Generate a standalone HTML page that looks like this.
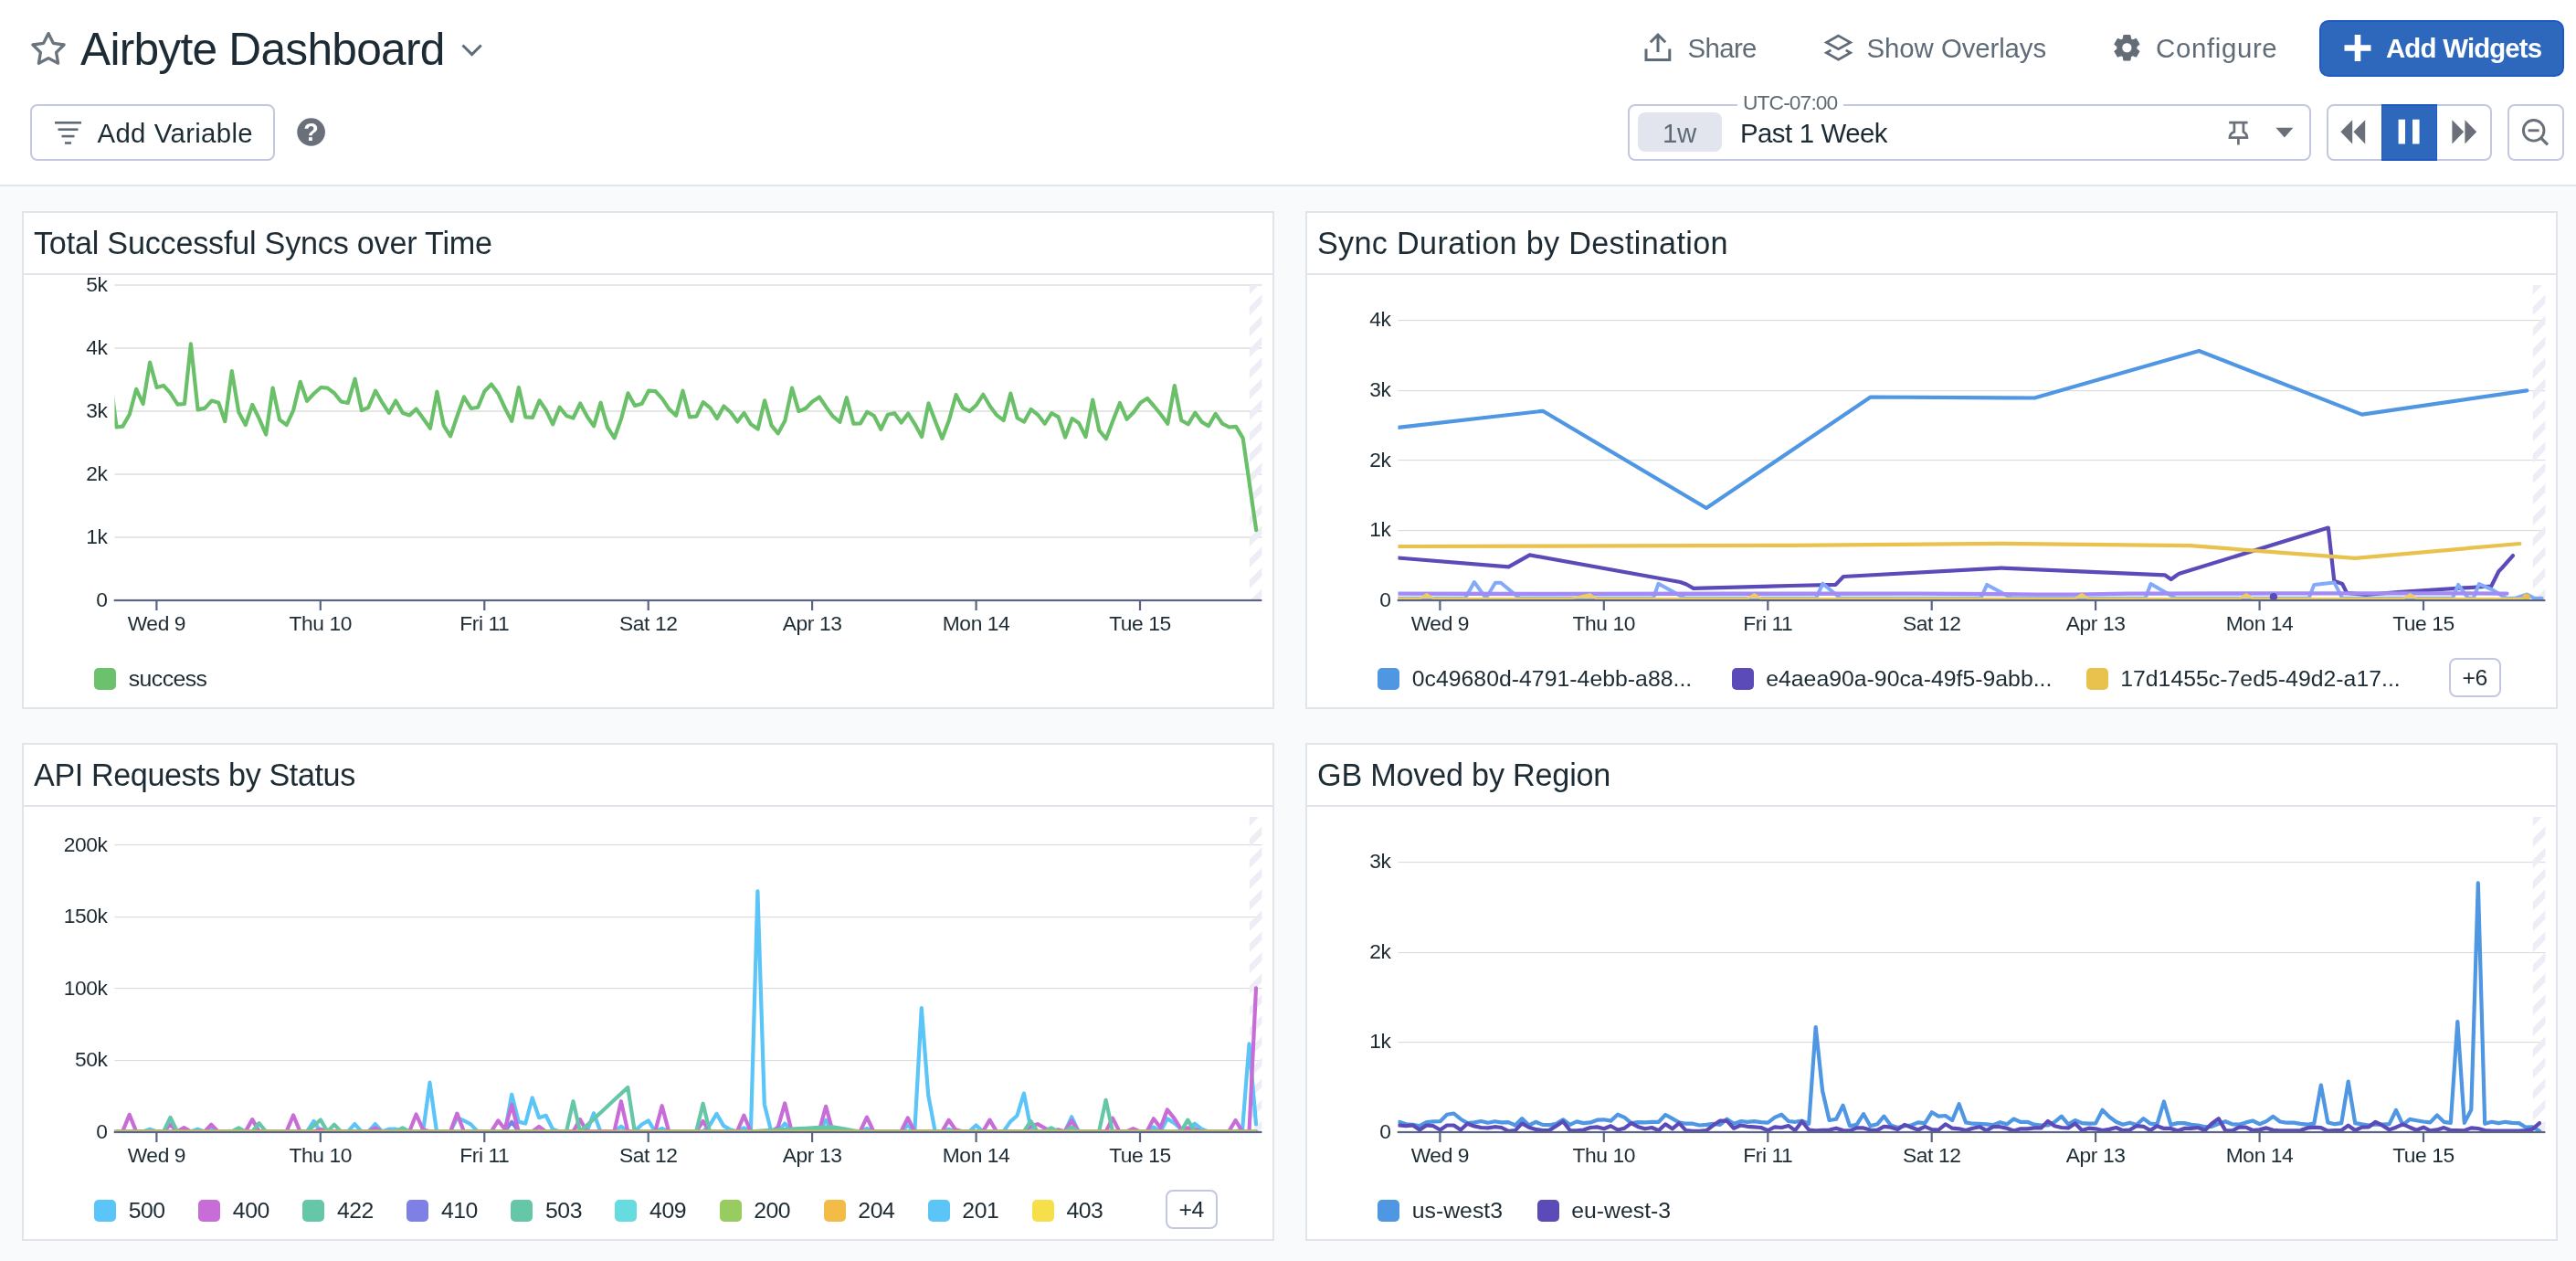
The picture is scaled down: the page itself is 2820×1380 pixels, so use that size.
<!DOCTYPE html>
<html lang="en"><head><meta charset="utf-8"><title>Airbyte Dashboard</title>
<style>
html,body{margin:0;padding:0}
body{width:2820px;height:1380px;overflow:hidden;background:#f9fafb;font-family:"Liberation Sans", "DejaVu Sans", sans-serif;color:#1c2b34;position:relative}
.hdr{position:absolute;left:0;top:0;width:2820px;height:202px;background:#fff;border-bottom:2px solid #e3e5ed}
.abs{position:absolute;white-space:nowrap}
.title{left:88px;top:25.7px;font-size:49.7px;line-height:56px;letter-spacing:-0.76px;color:#1c2b34}
.btn{position:absolute;box-sizing:border-box;border:2px solid #c3c8e0;border-radius:8px;background:#fff}
.t28{font-size:29.4px;line-height:34px;word-spacing:0.5px}
.grey{color:#5f6b76}
.panel{position:absolute;box-sizing:border-box;width:1371px;height:545px;background:#fff;border:2px solid #e2e4ec}
.panel .pt{position:absolute;left:11px;top:13.3px;font-size:34.2px;line-height:40px;white-space:nowrap;color:#1c2b34}
.panel .psep{position:absolute;left:0;top:66px;width:1367px;height:2px;background:#e2e4ec}
.panel svg.ch{position:absolute;left:-2px;top:-2px}
.tk{font-family:"Liberation Sans", "DejaVu Sans", sans-serif;font-size:22.8px;letter-spacing:-0.4px;fill:#1c2b34}
.sw{position:absolute;top:498px;width:24px;height:24px;border-radius:5px;margin-left:-2px}
.lg{position:absolute;top:494.8px;font-size:24.8px;line-height:30px;white-space:nowrap;margin-left:-2px;color:#1c2b34}
.more{position:absolute;top:486.5px;height:43.5px;box-sizing:border-box;border:2px solid #c3c8e0;border-radius:8px;font-size:24.8px;line-height:40px;letter-spacing:-0.4px;text-align:center;margin-left:-2px;color:#1c2b34}
#wrap{position:absolute;left:0;top:0;width:2820px;height:1380px;will-change:transform}

</style></head><body>
<div id="wrap">
<div class="hdr">
<svg class="abs" style="left:32px;top:32px" width="42" height="42" viewBox="0 0 42 42"><path d="M21.0 4.6 L26.3 15.3 L38.1 17.0 L29.6 25.4 L31.6 37.2 L21.0 31.6 L10.4 37.2 L12.4 25.4 L3.9 17.0 L15.7 15.3 Z" fill="none" stroke="#6b747c" stroke-width="3.3" stroke-linejoin="round"/></svg>
<div class="abs title">Airbyte Dashboard</div>
<svg class="abs" style="left:503px;top:45px" width="28" height="20" viewBox="0 0 28 20"><path d="M3.5 4.5 L13.6 14.6 L23.7 4.5" fill="none" stroke="#5f6b76" stroke-width="3"/></svg>

<div class="btn" style="left:33px;top:114px;width:268px;height:62px"></div>
<svg class="abs" style="left:58px;top:130px" width="34" height="30" viewBox="0 0 34 30"><g fill="#5f6b76"><rect x="2" y="3" width="29" height="2.6"/><rect x="5.5" y="10.4" width="22" height="2.6"/><rect x="9.5" y="17.8" width="14" height="2.6"/><rect x="13" y="25.2" width="7" height="2.6"/></g></svg>
<div class="abs t28" style="left:106.5px;top:129px;letter-spacing:0.32px;color:#1c2b34">Add Variable</div>
<svg class="abs" style="left:324px;top:128px" width="34" height="34" viewBox="0 0 34 34"><circle cx="16.6" cy="16.5" r="15.3" fill="#6a7079"/><text x="16.6" y="26.4" text-anchor="middle" font-family="Liberation Sans, sans-serif" font-weight="bold" font-size="27" fill="#fff">?</text></svg>

<!-- right actions -->
<svg class="abs" style="left:1797.4px;top:32px" width="36" height="38" viewBox="0 0 36 38"><path d="M5 21.5 V33.4 H30.8 V21.5" fill="none" stroke="#5f6b76" stroke-width="3"/><path d="M18 25 V6.5 M9.8 14.2 L18 6 L26.2 14.2" fill="none" stroke="#5f6b76" stroke-width="3"/></svg>
<div class="abs t28 grey" style="left:1847.5px;top:36.3px;letter-spacing:-0.63px">Share</div>
<svg class="abs" style="left:1994px;top:34px" width="38" height="36" viewBox="0 0 38 36"><path d="M18.55 5.1 L31.7 12.45 L18.55 19.8 L5.4 12.45 Z" fill="none" stroke="#5f6b76" stroke-width="2.7" stroke-linejoin="miter"/><path d="M10.4 20.9 L5.4 23.7 L18.55 31.2 L31.7 23.7 L26.7 20.9" fill="none" stroke="#5f6b76" stroke-width="2.7"/></svg>
<div class="abs t28 grey" style="left:2043.5px;top:36.3px;letter-spacing:-0.13px">Show Overlays</div>
<svg class="abs" style="left:2312px;top:36px" width="33" height="33" viewBox="0 0 33 33"><path fill="#646d76" fill-rule="evenodd" stroke="#646d76" stroke-width="1" stroke-linejoin="round" d="M12.26 6.54 L12.84 2.55 L19.96 2.55 L20.54 6.54 L22.78 7.83 L26.53 6.35 L30.08 12.51 L26.92 15.01 L26.92 17.59 L30.08 20.09 L26.53 26.25 L22.78 24.77 L20.54 26.06 L19.96 30.05 L12.84 30.05 L12.26 26.06 L10.02 24.77 L6.27 26.25 L2.72 20.09 L5.88 17.59 L5.88 15.01 L2.72 12.51 L6.27 6.35 L10.02 7.83 Z M22.00 16.30 A5.6 5.6 0 1 0 10.80 16.30 A5.6 5.6 0 1 0 22.00 16.30 Z"/></svg>
<div class="abs t28 grey" style="left:2360px;top:36.3px;letter-spacing:0.66px">Configure</div>
<div class="abs" style="left:2539px;top:22px;width:268px;height:62px;box-sizing:border-box;border-radius:10px;background:#2d68bd;border:2px solid #1f5ac4"></div>
<svg class="abs" style="left:2564px;top:36px" width="34" height="34" viewBox="0 0 34 34"><path d="M17 2 V31 M2.5 16.5 H31.5" stroke="#fff" stroke-width="6.6" fill="none"/></svg>
<div class="abs t28" style="left:2612px;top:36.3px;color:#fff;font-weight:bold;letter-spacing:-0.88px">Add Widgets</div>

<!-- time picker -->
<div class="btn" style="left:1782px;top:114px;width:748px;height:62px"></div>
<div class="abs" style="left:1902px;top:110px;width:116px;height:10px;background:#fff"></div>
<div class="abs grey" style="left:1908px;top:98px;font-size:22.8px;line-height:28px;letter-spacing:-0.9px">UTC-07:00</div>
<div class="abs" style="left:1793px;top:123px;width:92px;height:43px;border-radius:8px;background:#e2e5ee"></div>
<div class="abs t28 grey" style="letter-spacing:-0.43px;left:1820px;top:129.2px">1w</div>
<div class="abs t28" style="left:1905px;top:129.2px;letter-spacing:-0.56px;color:#1c2b34">Past 1 Week</div>
<svg class="abs" style="left:2436px;top:130px" width="30" height="32" viewBox="0 0 30 32"><path d="M4.2 4.2 H24.6 M9.9 4.2 V14.2 C7 15.3 4.9 17.5 4.9 20.6 H23.9 C23.9 17.5 22 15.3 19.9 14.2 V4.2 M14.4 20.6 V28.6" fill="none" stroke="#6a7079" stroke-width="2.7"/></svg>
<svg class="abs" style="left:2489px;top:137px" width="24" height="16" viewBox="0 0 24 16"><path d="M2.4 2.7 H21.4 L11.9 13.4 Z" fill="#6a7079"/></svg>

<div class="btn" style="left:2547px;top:114px;width:181px;height:62px"></div>
<div class="abs" style="left:2607px;top:114px;width:61px;height:62px;background:#2d68bd;box-sizing:border-box;border:2px solid #1f5ac4;border-left-width:1px;border-right-width:1px"></div>
<svg class="abs" style="left:2560px;top:129px" width="32" height="30" viewBox="0 0 32 30"><path d="M2.4 15.3 L15.2 2.2 V28.4 Z M16.4 15.3 L29.2 2.2 V28.4 Z" fill="#6a7079"/></svg>
<svg class="abs" style="left:2623px;top:129px" width="30" height="30" viewBox="0 0 30 30"><path d="M2.6 1.8 H10 V28.4 H2.6 Z M18 1.8 H25.6 V28.4 H18 Z" fill="#fff"/></svg>
<svg class="abs" style="left:2682px;top:129px" width="32" height="30" viewBox="0 0 32 30"><path d="M29.2 15.3 L16.4 2.2 V28.4 Z M15.2 15.3 L2.4 2.2 V28.4 Z" fill="#6a7079"/></svg>

<div class="btn" style="left:2745px;top:114px;width:62px;height:62px"></div>
<svg class="abs" style="left:2757px;top:127px" width="36" height="36" viewBox="0 0 36 36"><circle cx="16.7" cy="15.8" r="11.3" fill="none" stroke="#6a7079" stroke-width="2.9"/><path d="M24.6 23.8 L32 31.4" stroke="#6a7079" stroke-width="3.2" fill="none"/><path d="M10.6 15.8 H22.6" stroke="#6a7079" stroke-width="2.9" fill="none"/></svg>
</div>

<div class="panel" style="left:24px;top:231px"><div class="pt" style="letter-spacing:-0.23px">Total Successful Syncs over Time</div><div class="psep"></div><svg class="ch" width="1371" height="545" viewBox="0 0 1371 545"><defs><pattern id="h1" width="16.26" height="16.26" patternUnits="userSpaceOnUse" patternTransform="rotate(-45)"><rect x="0" y="0" width="16.26" height="6.6" fill="#ecedf5"/></pattern><clipPath id="c1"><rect x="101.5" y="75.0" width="1255.9" height="352.0"/></clipPath></defs><rect x="101.5" y="356" width="1255.9" height="2" fill="#e6e6e6"/><rect x="101.5" y="287" width="1255.9" height="2" fill="#e6e6e6"/><rect x="101.5" y="218" width="1255.9" height="2" fill="#e6e6e6"/><rect x="101.5" y="149" width="1255.9" height="2" fill="#e6e6e6"/><rect x="101.5" y="80" width="1255.9" height="2" fill="#e6e6e6"/><rect x="1343.8" y="81.0" width="13.6" height="344.0" fill="url(#h1)"/><text x="93.5" y="432.8" text-anchor="end" class="tk">0</text><text x="93.5" y="363.8" text-anchor="end" class="tk">1k</text><text x="93.5" y="294.8" text-anchor="end" class="tk">2k</text><text x="93.5" y="225.8" text-anchor="end" class="tk">3k</text><text x="93.5" y="156.8" text-anchor="end" class="tk">4k</text><text x="93.5" y="87.8" text-anchor="end" class="tk">5k</text><g clip-path="url(#c1)"><polyline points="94.5,166.3 103.5,236.5 110.3,235.6 117.7,222.8 125.2,194.8 132.6,211 140.1,165.6 147.6,193 155,190.9 162.5,199.2 170.5,211.6 178,211 184.9,145.4 192.6,217.4 200.3,215.6 207.8,207.5 215.3,209.7 222.3,230.2 229.8,175 237.4,220.3 244.8,234 252.3,212 259.7,227.1 267.2,244.5 274.6,193.6 282.1,228.4 289.8,234 297.2,217.8 304.7,186.8 312.1,207.9 319.6,199.8 327.3,193 334.5,193.6 342,199.2 349.4,208.5 356.9,210 364.6,183.7 372,218.2 379.2,215 387.1,196.7 394.5,209.7 401.8,220.9 409.2,207.5 416.9,220.9 424.3,223.4 431.7,216.6 439.3,227.1 447,237.7 454.4,197.7 461.7,234.6 469.1,246.4 476.6,224 484,203.5 491.7,216 499.2,214.7 506.4,197.3 513.8,189.6 521.5,199.8 529,216 536.2,229.9 543.9,193 551.3,225.3 559,225.9 566.5,207.3 573.7,217.8 581.2,233.3 588.6,214.7 596.1,224 603.5,226.5 611.2,210.4 618.7,224.7 626.1,235.2 633.6,209.7 641,236.5 648.6,248.3 656.1,227.1 663.5,199.4 671,212.9 678.7,210.7 686.1,196.7 693.6,197.1 701,205.4 708.5,216.6 716.1,223.7 723.5,196.7 730.9,225.3 738.4,224.7 745.8,209.1 753.5,215.3 761,227.1 768.4,213.5 775.9,220.3 783.3,230.6 790.5,220.9 798,233.3 805.7,238.6 813.1,207.3 820.6,234.6 827.8,243.3 835.3,229.6 843,193.6 850.4,219.1 857.9,216 865.3,208.5 873,203.5 880.5,214.7 887.9,224.7 895.4,230.9 902.8,204.2 910.4,232.7 917.9,232.4 925.3,219.7 932.8,224 940.3,238.9 947.8,222.8 955.3,221.2 962.7,231.5 970.2,221.5 977.6,233.3 985.1,247 992.5,210.4 1000,230.2 1007.4,248.9 1015.1,228.4 1022.6,201 1030,215.3 1037.4,219.1 1044.9,212.2 1052.3,200.8 1059.8,213.5 1067.2,223.4 1074.7,229 1082.3,199.6 1089.7,226.5 1097.2,230.6 1104.6,217 1112.1,222.8 1119.8,232.7 1127.2,221.2 1134.7,225.3 1142.1,247.6 1149.6,227.1 1157.1,232.1 1164.5,247 1172.2,206.6 1179.4,240.2 1186.9,249.2 1194.3,229.6 1201.9,210 1209.5,227.8 1216.9,220.3 1224.5,209.7 1232,205 1239.4,213.5 1246.9,222.8 1254.3,232.7 1261.8,191.1 1269.2,229 1276.7,233.3 1284.4,220.7 1291.8,230.9 1299,235.2 1306.7,221.9 1314.2,232.7 1321.7,236.5 1329.1,235.8 1336.6,248.3 1351.2,349.1" fill="none" stroke="#6abf69" stroke-width="4.2" stroke-linejoin="round" stroke-linecap="round" /></g><rect x="100.7" y="424.9" width="1256.7" height="2.2" fill="#5a6480"/><rect x="146.3" y="427.0" width="2.2" height="10" fill="#5a6480"/><text x="147.4" y="459.3" text-anchor="middle" class="tk">Wed 9</text><rect x="325.7" y="427.0" width="2.2" height="10" fill="#5a6480"/><text x="326.8" y="459.3" text-anchor="middle" class="tk">Thu 10</text><rect x="505.2" y="427.0" width="2.2" height="10" fill="#5a6480"/><text x="506.3" y="459.3" text-anchor="middle" class="tk">Fri 11</text><rect x="684.6" y="427.0" width="2.2" height="10" fill="#5a6480"/><text x="685.7" y="459.3" text-anchor="middle" class="tk">Sat 12</text><rect x="864" y="427.0" width="2.2" height="10" fill="#5a6480"/><text x="865.1" y="459.3" text-anchor="middle" class="tk">Apr 13</text><rect x="1043.5" y="427.0" width="2.2" height="10" fill="#5a6480"/><text x="1044.6" y="459.3" text-anchor="middle" class="tk">Mon 14</text><rect x="1222.9" y="427.0" width="2.2" height="10" fill="#5a6480"/><text x="1224" y="459.3" text-anchor="middle" class="tk">Tue 15</text></svg><i class="sw" style="left:79px;background:#6bc16c"></i><span class="lg" style="left:116.7px;letter-spacing:-0.55px">success</span></div>
<div class="panel" style="left:1429px;top:231px"><div class="pt" style="letter-spacing:0.32px">Sync Duration by Destination</div><div class="psep"></div><svg class="ch" width="1371" height="545" viewBox="0 0 1371 545"><defs><pattern id="h2" width="16.26" height="16.26" patternUnits="userSpaceOnUse" patternTransform="rotate(-45)"><rect x="0" y="0" width="16.26" height="6.6" fill="#ecedf5"/></pattern><clipPath id="c2"><rect x="101.5" y="75.0" width="1255.9" height="352.0"/></clipPath></defs><rect x="101.5" y="349" width="1255.9" height="1.15" fill="#dcdcdc"/><rect x="101.5" y="272" width="1255.9" height="1.15" fill="#dcdcdc"/><rect x="101.5" y="196" width="1255.9" height="1.15" fill="#dcdcdc"/><rect x="101.5" y="119" width="1255.9" height="1.15" fill="#dcdcdc"/><rect x="1343.8" y="81.0" width="13.6" height="344.0" fill="url(#h2)"/><text x="93.5" y="432.8" text-anchor="end" class="tk">0</text><text x="93.5" y="356.2" text-anchor="end" class="tk">1k</text><text x="93.5" y="279.6" text-anchor="end" class="tk">2k</text><text x="93.5" y="203" text-anchor="end" class="tk">3k</text><text x="93.5" y="126.4" text-anchor="end" class="tk">4k</text><g clip-path="url(#c2)"><polyline points="101.2,379.5 222.5,389.4 245.6,376.4 410.4,406 417.2,408.5 424.9,412.8 531,410 580.5,408.9 589,400 761.6,390.6 940.9,398.3 947.7,403 954.6,398 956.7,396.7 1119.8,346.6 1126.3,404.8 1135.2,408 1140.1,417.9 1161,420 1195.6,417 1298.3,410.5 1306.4,394.2 1310,390.5 1321.9,377.1" fill="none" stroke="#5a4bb9" stroke-width="4.2" stroke-linejoin="round" stroke-linecap="round" /><polyline points="101.4,423.7 175,423.7 184.9,406 197.7,423.7 208,406.8 214,406.8 234.5,423.7 251,423.7 381,423.7 386.5,407.7 415.5,423.7 559,423.7 566.5,407.7 585.7,423.7 611,423.7 739.4,423.7 746.2,408.9 773.5,423.7 801,423.7 919.5,423.7 925.5,408 952.9,423.7 971,423.7 1098.6,423.7 1104.3,408.9 1126.3,406.4 1135.2,423.7 1171,423.7 1255.9,423.7 1262.1,408.9 1273,423.7 1278.7,423.7 1284.9,408.1 1298.3,413.8 1314.6,423.7 1324.4,423.7 1337.4,419.5 1345.6,423.7 1353.7,423.7" fill="none" stroke="#82aaf8" stroke-width="4" stroke-linejoin="round" stroke-linecap="round" /><polyline points="101.4,418.6 271,419 471,418.8 671,418.6 801,419.6 841,419.6 901,418.6 1071,418.4 1271,418.4 1315.4,418.6" fill="none" stroke="#a08cf4" stroke-width="4.4" stroke-linejoin="round" stroke-linecap="round" /><polyline points="101.4,424.1 125.3,424.1 132.8,419.4 140.3,424.1 291.3,424.1 311.3,419.4 318.8,424.1 484,424.1 491.5,419.4 499,424.1 842.5,424.1 850,419.4 857.5,424.1 1022.6,424.1 1030.1,419.4 1037.6,424.1 1201.9,424.1 1209.4,419.4 1216.9,424.1 1337,424.1" fill="#f0cd62" stroke="#f0cd62" stroke-width="2.6" stroke-linejoin="round" stroke-linecap="round" /><polyline points="101.4,367 271,366.6 531,365.8 761.6,363.8 969,366.2 1149.1,379.9 1329.3,364" fill="none" stroke="#e8c24c" stroke-width="4.2" stroke-linejoin="round" stroke-linecap="round" /><polyline points="101.4,236.8 260,218.8 439,325 618.8,203.5 798.2,204.5 978.3,153 1156.7,222.6 1337.3,196.3" fill="none" stroke="#4f96e3" stroke-width="4.2" stroke-linejoin="round" stroke-linecap="round" /><circle cx="1059.9" cy="422.3" r="4.2" fill="#5a4bb9"/><circle cx="1336.6" cy="422.8" r="4.2" fill="#e8c24c"/></g><rect x="100.7" y="424.9" width="1256.7" height="2.2" fill="#5a6480"/><rect x="146.3" y="427.0" width="2.2" height="10" fill="#5a6480"/><text x="147.4" y="459.3" text-anchor="middle" class="tk">Wed 9</text><rect x="325.7" y="427.0" width="2.2" height="10" fill="#5a6480"/><text x="326.8" y="459.3" text-anchor="middle" class="tk">Thu 10</text><rect x="505.2" y="427.0" width="2.2" height="10" fill="#5a6480"/><text x="506.3" y="459.3" text-anchor="middle" class="tk">Fri 11</text><rect x="684.6" y="427.0" width="2.2" height="10" fill="#5a6480"/><text x="685.7" y="459.3" text-anchor="middle" class="tk">Sat 12</text><rect x="864" y="427.0" width="2.2" height="10" fill="#5a6480"/><text x="865.1" y="459.3" text-anchor="middle" class="tk">Apr 13</text><rect x="1043.5" y="427.0" width="2.2" height="10" fill="#5a6480"/><text x="1044.6" y="459.3" text-anchor="middle" class="tk">Mon 14</text><rect x="1222.9" y="427.0" width="2.2" height="10" fill="#5a6480"/><text x="1224" y="459.3" text-anchor="middle" class="tk">Tue 15</text></svg><i class="sw" style="left:79px;background:#4f96e3"></i><span class="lg" style="left:116.7px;letter-spacing:0.02px">0c49680d-4791-4ebb-a88...</span><i class="sw" style="left:466.5px;background:#5a4bb9"></i><span class="lg" style="left:504.2px;letter-spacing:0.01px">e4aea90a-90ca-49f5-9abb...</span><i class="sw" style="left:854.5px;background:#e8c24c"></i><span class="lg" style="left:892.2px;letter-spacing:0.02px">17d1455c-7ed5-49d2-a17...</span><span class="more" style="left:1252px;width:56.5px">+6</span></div>
<div class="panel" style="left:24px;top:813px"><div class="pt" style="letter-spacing:-0.42px">API Requests by Status</div><div class="psep"></div><svg class="ch" width="1371" height="545" viewBox="0 0 1371 545"><defs><pattern id="h3" width="16.26" height="16.26" patternUnits="userSpaceOnUse" patternTransform="rotate(-45)"><rect x="0" y="0" width="16.26" height="6.6" fill="#ecedf5"/></pattern><clipPath id="c3"><rect x="101.5" y="75.0" width="1255.9" height="352.0"/></clipPath></defs><rect x="101.5" y="347" width="1255.9" height="1.15" fill="#dcdcdc"/><rect x="101.5" y="268" width="1255.9" height="1.15" fill="#dcdcdc"/><rect x="101.5" y="190" width="1255.9" height="1.15" fill="#dcdcdc"/><rect x="101.5" y="111" width="1255.9" height="1.15" fill="#dcdcdc"/><rect x="1343.8" y="81.0" width="13.6" height="344.0" fill="url(#h3)"/><text x="93.5" y="432.8" text-anchor="end" class="tk">0</text><text x="93.5" y="354.2" text-anchor="end" class="tk">50k</text><text x="93.5" y="275.7" text-anchor="end" class="tk">100k</text><text x="93.5" y="197.2" text-anchor="end" class="tk">150k</text><text x="93.5" y="118.6" text-anchor="end" class="tk">200k</text><g clip-path="url(#c3)"><polyline points="102.7,425.4 110.2,425.4 117.7,425.4 125.1,425.4 132.6,425.4 140.1,425.4 147.6,425.4 155,425.4 162.5,425.4 170,425.4 177.4,425.4 184.9,425.4 192.4,425.4 199.9,425.4 207.3,425.4 214.8,425.4 222.3,425.4 229.8,425.4 237.2,425.4 244.7,425.4 252.2,425.4 259.7,425.4 267.1,425.4 274.6,425.4 282.1,425.4 289.6,425.4 297.1,425.4 304.5,425.4 312,425.4 319.5,425.4 326.9,425.4 334.4,425.4 341.9,425.4 349.4,425.4 356.8,425.4 364.3,425.4 371.8,425.4 379.3,425.4 386.8,425.4 394.2,425.4 401.7,425.4 409.2,425.4 416.6,425.4 424.1,425.4 431.6,425.4 439.1,425.4 446.5,425.4 454,425.4 461.5,425.4 469,425.4 476.4,425.4 483.9,425.4 491.4,425.4 498.9,425.4 506.3,425.4 513.8,425.4 521.3,425.4 528.8,425.4 536.2,414.6 543.7,425.4 551.2,425.4 558.7,425.4 566.1,425.4 573.6,425.4 581.1,425.4 588.6,425.4 596,425.4 603.5,425.4 611,425.4 618.5,425.4 626,425.4 633.4,425.4 640.9,425.4 648.4,425.4 655.9,425.4 663.3,425.4 670.8,425.4 678.3,425.4 685.8,425.4 693.2,425.4 700.7,425.4 708.2,425.4 715.6,425.4 723.1,425.4 730.6,425.4 738.1,425.4 745.6,425.4 753,425.4 760.5,425.4 768,425.4 775.5,425.4 782.9,425.4 790.4,425.4 797.9,425.4 805.4,425.4 812.8,425.4 820.3,425.4 827.8,425.4 835.2,425.4 842.7,425.4 850.2,425.4 857.7,425.4 865.1,425.4 872.6,425.4 880.1,425.4 887.6,425.4 895,425.4 902.5,425.4 910,425.4 917.5,425.4 925,425.4 932.4,425.4 939.9,425.4 947.4,425.4 954.9,425.4 962.3,425.4 969.8,425.4 977.3,425.4 984.8,425.4 992.2,425.4 999.7,425.4 1007.2,425.4 1014.6,425.4 1022.1,425.4 1029.6,425.4 1037.1,425.4 1044.5,425.4 1052,425.4 1059.5,425.4 1067,425.4 1074.5,425.4 1081.9,425.4 1089.4,425.4 1096.9,425.4 1104.3,425.4 1111.8,425.4 1119.3,425.4 1126.8,425.4 1134.2,425.4 1141.7,425.4 1149.2,425.4 1156.7,425.4 1164.2,425.4 1171.6,425.4 1179.1,425.4 1186.6,425.4 1194,425.4 1201.5,425.4 1209,425.4 1216.5,425.4 1224,425.4 1231.4,425.4 1238.9,425.4 1246.4,425.4 1253.8,425.4 1261.3,425.4 1268.8,425.4 1276.3,425.4 1283.8,425.4 1291.2,425.4 1298.7,425.4 1306.2,425.4 1313.7,425.4 1321.1,425.4 1328.6,425.4 1336.1,425.4 1343.5,425.4 1351,425.4" fill="none" stroke="#7f80e6" stroke-width="4" stroke-linejoin="round" stroke-linecap="round" /><polyline points="102.7,425.4 110.2,425.4 117.7,425.4 125.1,425.4 132.6,425.4 140.1,422.7 147.6,425.4 155,425.4 162.5,425.4 170,425.4 177.4,425.4 184.9,425.4 192.4,422.7 199.9,425.4 207.3,422 214.8,425.4 222.3,425.4 229.8,425.4 237.2,425.4 244.7,425.4 252.2,425.4 259.7,425.4 267.1,425.4 274.6,425.4 282.1,425.4 289.6,425.4 297.1,425.4 304.5,425.4 312,425.4 319.5,414 326.9,425.4 334.4,425.4 341.9,425.4 349.4,425.4 356.8,425.4 364.3,417.1 371.8,425.4 379.3,425.4 386.8,417.1 394.2,425.4 401.7,422.7 409.2,422.7 416.6,425.4 424.1,425.4 431.6,425.4 439.1,425.4 446.5,371.7 454,425.4 461.5,425.4 469,425.4 476.4,410.4 483.9,413.4 491.4,417.4 498.9,425.4 506.3,425.4 513.8,425.4 521.3,425.4 528.8,425.4 536.2,384.8 543.7,414.6 551.2,416.5 558.7,388.5 566.1,410.2 573.6,407.8 581.1,422.7 588.6,425.4 596,425.4 603.5,425.4 611,425.4 618.5,425.4 626,405.3 633.4,425.4 640.9,425.4 648.4,425.4 655.9,419.6 663.3,425.4 670.8,425.4 678.3,417.7 685.8,413.4 693.2,425.4 700.7,422 708.2,425.4 715.6,425.4 723.1,425.4 730.6,425.4 738.1,425.4 745.6,425.4 753,418.4 760.5,405.9 768,418.9 775.5,423.4 782.9,425.4 790.4,421.4 797.9,425.4 805.4,162.4 812.8,395.4 820.3,425.4 827.8,425.4 835.2,416.5 842.7,425.4 850.2,425.4 857.7,425.4 865.1,425.4 872.6,425.4 880.1,412.7 887.6,425.4 895,425.4 902.5,425.4 910,425.4 917.5,425.4 925,422 932.4,425.4 939.9,425.4 947.4,425.4 954.9,425.4 962.3,425.4 969.8,418.4 977.3,425.4 984.8,290.2 992.2,385.4 999.7,425.4 1007.2,425.4 1014.6,422.7 1022.1,425.4 1029.6,425.4 1037.1,425.4 1044.5,418.5 1052,425.4 1059.5,425.4 1067,425.4 1074.5,425.4 1081.9,414.6 1089.4,408 1096.9,383.6 1104.3,421.4 1111.8,425.4 1119.3,425.4 1126.8,425.4 1134.2,425.4 1141.7,425.4 1149.2,409.3 1156.7,425.4 1164.2,425.4 1171.6,425.4 1179.1,425.4 1186.6,425.4 1194,425.4 1201.5,425.4 1209,425.4 1216.5,425.4 1224,425.4 1231.4,425.4 1238.9,420.5 1246.4,425.4 1253.8,411.3 1261.3,415.9 1268.8,422.4 1276.3,425.4 1283.8,416.6 1291.2,422.5 1298.7,425.4 1306.2,425.4 1313.7,425.4 1321.1,425.4 1328.6,425.4 1336.1,423.4 1343.5,329.4 1351,417.4" fill="none" stroke="#5bc5f7" stroke-width="4.2" stroke-linejoin="round" stroke-linecap="round" /><polyline points="102.7,425.4 110.2,425.4 117.7,406.8 125.1,425.4 132.6,425.4 140.1,425.4 147.6,425.4 155,425.4 162.5,417.7 170,425.4 177.4,421.2 184.9,425.4 192.4,425.4 199.9,425.4 207.3,417.7 214.8,425.4 222.3,425.4 229.8,425.4 237.2,425.4 244.7,425.4 252.2,412.1 259.7,425.4 267.1,425.4 274.6,425.4 282.1,425.4 289.6,425.4 297.1,407.5 304.5,425.4 312,425.4 319.5,425.4 326.9,422.7 334.4,425.4 341.9,425.4 349.4,425.4 356.8,425.4 364.3,425.4 371.8,425.4 379.3,425.4 386.8,421.4 394.2,425.4 401.7,425.4 409.2,425.4 416.6,425.4 424.1,425.4 431.6,406.5 439.1,423.4 446.5,425.4 454,425.4 461.5,425.4 469,425.4 476.4,405.6 483.9,425.4 491.4,425.4 498.9,425.4 506.3,425.4 513.8,425.4 521.3,413.4 528.8,422.7 536.2,396 543.7,425.4 551.2,425.4 558.7,425.4 566.1,419.9 573.6,425.4 581.1,425.4 588.6,425.4 596,425.4 603.5,425.4 611,412.1 618.5,425.4 626,425.4 633.4,425.4 640.9,425.4 648.4,425.4 655.9,392.2 663.3,425.4 670.8,425.4 678.3,425.4 685.8,425.4 693.2,425.4 700.7,397.2 708.2,425.4 715.6,425.4 723.1,425.4 730.6,425.4 738.1,425.4 745.6,414 753,425.4 760.5,425.4 768,425.4 775.5,425.4 782.9,425.4 790.4,407.8 797.9,425.4 805.4,425.4 812.8,425.4 820.3,425.4 827.8,420.4 835.2,394.4 842.7,425.4 850.2,425.4 857.7,425.4 865.1,425.4 872.6,425.4 880.1,397.8 887.6,425.4 895,425.4 902.5,425.4 910,425.4 917.5,425.4 925,409.6 932.4,425.4 939.9,425.4 947.4,425.4 954.9,425.4 962.3,425.4 969.8,410.5 977.3,425.4 984.8,425.4 992.2,425.4 999.7,425.4 1007.2,425.4 1014.6,412.7 1022.1,423.4 1029.6,425.4 1037.1,425.4 1044.5,425.4 1052,425.4 1059.5,412.6 1067,425.4 1074.5,425.4 1081.9,425.4 1089.4,425.4 1096.9,425.4 1104.3,419.4 1111.8,417.2 1119.3,421.4 1126.8,425.4 1134.2,423.4 1141.7,425.4 1149.2,413.3 1156.7,425.4 1164.2,425.4 1171.6,425.4 1179.1,425.4 1186.6,425.4 1194,410.6 1201.5,425.4 1209,425.4 1216.5,422.2 1224,425.4 1231.4,425.4 1238.9,411.3 1246.4,421.2 1253.8,401.4 1261.3,410.6 1268.8,422.5 1276.3,421.4 1283.8,422.4 1291.2,425.4 1298.7,425.4 1306.2,425.4 1313.7,425.4 1321.1,425.4 1328.6,413 1336.1,425.4 1343.5,425.4 1351,268.4" fill="none" stroke="#c86dd8" stroke-width="4.2" stroke-linejoin="round" stroke-linecap="round" /><polyline points="102.7,425.4 110.2,425.4 117.7,425.4 125.1,425.4 132.6,425.4 140.1,425.4 147.6,425.4 155,425.4 162.5,410 170,425.4 177.4,425.4 184.9,425.4 192.4,425.4 199.9,425.4 207.3,425.4 214.8,425.4 222.3,425.4 229.8,425.4 237.2,421.4 244.7,425.4 252.2,425.4 259.7,416.2 267.1,425.4 274.6,425.4 282.1,425.4 289.6,425.4 297.1,425.4 304.5,425.4 312,425.4 319.5,418.9 326.9,412.5 334.4,425.4 341.9,417.7 349.4,425.4 356.8,425.4 364.3,425.4 371.8,425.4 379.3,425.4 386.8,425.4 394.2,425.4 401.7,425.4 409.2,425.4 416.6,421.4 424.1,425.4 431.6,425.4 439.1,425.4 446.5,425.4 454,425.4 461.5,425.4 469,425.4 476.4,425.4 483.9,425.4 491.4,425.4 498.9,425.4 506.3,425.4 513.8,425.4 521.3,425.4 528.8,425.4 536.2,425.4 543.7,425.4 551.2,425.4 558.7,425.4 566.1,425.4 573.6,425.4 581.1,425.4 588.6,425.4 596,425.4 603.5,392.2 611,425.4 618.5,418.5 626,411.6 633.4,404.7 640.9,397.7 648.4,390.8 655.9,383.9 663.3,377 670.8,425.4 678.3,425.4 685.8,425.4 693.2,425.4 700.7,425.4 708.2,425.4 715.6,425.4 723.1,425.4 730.6,425.4 738.1,425.4 745.6,394.7 753,425.4 760.5,425.4 768,425.4 775.5,425.4 782.9,425.4 790.4,425.4 797.9,425.4 805.4,424.9 812.8,424.4 820.3,423.9 827.8,423.4 835.2,423 842.7,422.6 850.2,422.2 857.7,421.8 865.1,421.4 872.6,420.9 880.1,420.4 887.6,420.4 895,421.6 902.5,422.9 910,424.2 917.5,425.4 925,425.4 932.4,425.4 939.9,425.4 947.4,425.4 954.9,425.4 962.3,425.4 969.8,425.4 977.3,425.4 984.8,425.4 992.2,425.4 999.7,425.4 1007.2,425.4 1014.6,425.4 1022.1,425.4 1029.6,425.4 1037.1,425.4 1044.5,425.4 1052,425.4 1059.5,425.4 1067,425.4 1074.5,425.4 1081.9,425.4 1089.4,425.4 1096.9,425.4 1104.3,413.9 1111.8,425.4 1119.3,425.4 1126.8,421.4 1134.2,425.4 1141.7,425.4 1149.2,420.5 1156.7,425.4 1164.2,425.4 1171.6,425.4 1179.1,425.4 1186.6,390.8 1194,425.4 1201.5,425.4 1209,425.4 1216.5,425.4 1224,425.4 1231.4,425.4 1238.9,425.4 1246.4,425.4 1253.8,425.4 1261.3,425.4 1268.8,425.4 1276.3,412.6 1283.8,425.4 1291.2,425.4 1298.7,425.4 1306.2,425.4 1313.7,425.4 1321.1,425.4 1328.6,425.4 1336.1,425.4 1343.5,425.4 1351,425.4" fill="none" stroke="#66c7a8" stroke-width="4.2" stroke-linejoin="round" stroke-linecap="round" /><polygon points="797.9,425.4 805.4,424.9 812.8,424.4 820.3,423.9 827.8,423.4 835.2,423 842.7,422.6 850.2,422.2 857.7,421.8 865.1,421.4 872.6,420.9 880.1,420.4 887.6,420.4 895,421.6 902.5,422.9 910,424.2 917.5,425.4 917.5,426 797.9,426" fill="#66c7a8"/><rect x="101.5" y="423.8" width="1249.5" height="1.4" fill="#f0c04a"/></g><rect x="100.7" y="424.9" width="1256.7" height="2.2" fill="#5a6480"/><rect x="146.3" y="427.0" width="2.2" height="10" fill="#5a6480"/><text x="147.4" y="459.3" text-anchor="middle" class="tk">Wed 9</text><rect x="325.7" y="427.0" width="2.2" height="10" fill="#5a6480"/><text x="326.8" y="459.3" text-anchor="middle" class="tk">Thu 10</text><rect x="505.2" y="427.0" width="2.2" height="10" fill="#5a6480"/><text x="506.3" y="459.3" text-anchor="middle" class="tk">Fri 11</text><rect x="684.6" y="427.0" width="2.2" height="10" fill="#5a6480"/><text x="685.7" y="459.3" text-anchor="middle" class="tk">Sat 12</text><rect x="864" y="427.0" width="2.2" height="10" fill="#5a6480"/><text x="865.1" y="459.3" text-anchor="middle" class="tk">Apr 13</text><rect x="1043.5" y="427.0" width="2.2" height="10" fill="#5a6480"/><text x="1044.6" y="459.3" text-anchor="middle" class="tk">Mon 14</text><rect x="1222.9" y="427.0" width="2.2" height="10" fill="#5a6480"/><text x="1224" y="459.3" text-anchor="middle" class="tk">Tue 15</text></svg><i class="sw" style="left:79px;background:#5bc5f7"></i><span class="lg" style="left:116.7px;letter-spacing:-0.45px">500</span><i class="sw" style="left:193.1px;background:#c86dd8"></i><span class="lg" style="left:230.8px;letter-spacing:-0.45px">400</span><i class="sw" style="left:307.2px;background:#66c7a8"></i><span class="lg" style="left:344.9px;letter-spacing:-0.45px">422</span><i class="sw" style="left:421.2px;background:#7f80e6"></i><span class="lg" style="left:458.9px;letter-spacing:-0.45px">410</span><i class="sw" style="left:535.3px;background:#66c7a8"></i><span class="lg" style="left:573px;letter-spacing:-0.45px">503</span><i class="sw" style="left:649.4px;background:#66dbe0"></i><span class="lg" style="left:687.1px;letter-spacing:-0.45px">409</span><i class="sw" style="left:763.5px;background:#98cc60"></i><span class="lg" style="left:801.2px;letter-spacing:-0.45px">200</span><i class="sw" style="left:877.6px;background:#f2bc47"></i><span class="lg" style="left:915.3px;letter-spacing:-0.45px">204</span><i class="sw" style="left:991.6px;background:#5bc5f7"></i><span class="lg" style="left:1029.3px;letter-spacing:-0.45px">201</span><i class="sw" style="left:1105.7px;background:#f7de4b"></i><span class="lg" style="left:1143.4px;letter-spacing:-0.45px">403</span><span class="more" style="left:1252px;width:56.5px">+4</span></div>
<div class="panel" style="left:1429px;top:813px"><div class="pt" style="letter-spacing:-0.21px">GB Moved by Region</div><div class="psep"></div><svg class="ch" width="1371" height="545" viewBox="0 0 1371 545"><defs><pattern id="h4" width="16.26" height="16.26" patternUnits="userSpaceOnUse" patternTransform="rotate(-45)"><rect x="0" y="0" width="16.26" height="6.6" fill="#ecedf5"/></pattern><clipPath id="c4"><rect x="101.5" y="75.0" width="1255.9" height="352.0"/></clipPath></defs><rect x="101.5" y="327" width="1255.9" height="1.15" fill="#dcdcdc"/><rect x="101.5" y="229" width="1255.9" height="1.15" fill="#dcdcdc"/><rect x="101.5" y="130" width="1255.9" height="1.15" fill="#dcdcdc"/><rect x="1343.8" y="81.0" width="13.6" height="344.0" fill="url(#h4)"/><text x="93.5" y="432.8" text-anchor="end" class="tk">0</text><text x="93.5" y="334.3" text-anchor="end" class="tk">1k</text><text x="93.5" y="235.8" text-anchor="end" class="tk">2k</text><text x="93.5" y="137.3" text-anchor="end" class="tk">3k</text><g clip-path="url(#c4)"><polyline points="102.7,414.8 110.2,417.3 117.7,417.9 125.1,419.2 132.6,415.2 140.1,414.4 147.6,414.2 155,406.7 162.5,405.5 170,411.7 177.4,416.1 184.9,415.4 192.4,414 199.9,415.7 207.3,414.2 214.8,415.4 222.3,415.2 229.8,418.5 237.2,411.1 244.7,418.5 252.2,414.8 259.7,417.9 267.1,418.2 274.6,416.7 282.1,412.3 289.6,417.9 297.1,414.4 304.5,416.1 312,415.4 319.5,412.7 326.9,412.3 334.4,413.6 341.9,406.7 349.4,409.9 356.8,416.1 364.3,415.2 371.8,415.4 379.3,414.8 386.8,414.8 394.2,407 401.7,411.1 409.2,415.4 416.6,416.7 424.1,416.7 431.6,418.5 439.1,417.9 446.5,416.7 454,417.9 461.5,411.7 469,416.7 476.4,414.2 483.9,414.8 491.4,414.2 498.9,415.2 506.3,415.7 513.8,409.9 521.3,406.7 528.8,414 536.2,414.8 543.7,413.6 551.2,416.7 558.7,311 566.1,380.7 573.6,413 581.1,411.7 588.6,396.8 596,419.2 603.5,417.9 611,406.1 618.5,419.2 626,417.3 633.4,408.6 640.9,418.5 648.4,421 655.9,419.2 663.3,418.5 670.8,415.4 678.3,416.1 685.8,404.3 693.2,408.6 700.7,408 708.2,413 715.6,395.3 723.1,415.4 730.6,416.7 738.1,416.9 745.6,417.3 753,418.2 760.5,415.2 768,417.3 775.5,411.5 782.9,414.8 790.4,414.8 797.9,417.7 805.4,418.5 812.8,418.5 820.3,414.8 827.8,408.6 835.2,417.3 842.7,413 850.2,416.1 857.7,416.7 865.1,416.4 872.6,401.8 880.1,409.2 887.6,414.8 895,417.7 902.5,415.7 910,417.9 917.5,411.1 925,416.7 932.4,417.3 939.9,392.5 947.4,417.9 954.9,416.1 962.3,416.1 969.8,417.9 977.3,418.5 984.8,420.4 992.2,419.8 999.7,416.7 1007.2,414.2 1014.6,417.3 1022.1,417.7 1029.6,415.4 1037.1,413.5 1044.5,417.2 1052,414.1 1059.5,408.8 1067,414.5 1074.5,415.7 1081.9,415.7 1089.4,416.8 1096.9,417.7 1104.3,416.4 1111.8,374.5 1119.3,415.4 1126.8,417.2 1134.2,416.1 1141.7,370.6 1149.2,416.1 1156.7,417.4 1164.2,418.5 1171.6,417.4 1179.1,417.7 1186.6,417.2 1194,402 1201.5,418.1 1209,411.9 1216.5,413.2 1224,414.5 1231.4,415.4 1238.9,407.5 1246.4,414.8 1253.8,415.8 1261.3,305 1268.8,415.8 1276.3,401.6 1283.8,153.4 1291.2,416.8 1298.7,414.8 1306.2,416.1 1313.7,414.8 1321.1,415.8 1328.6,416.1 1336.1,420.7 1343.5,420.3 1351,424.7" fill="none" stroke="#4f96e3" stroke-width="4.2" stroke-linejoin="round" stroke-linecap="round" /><polyline points="102.7,418.5 110.2,419.2 117.7,418.5 125.1,423.5 132.6,418.5 140.1,419.2 147.6,423.5 155,418.5 162.5,418.5 170,423.5 177.4,416.7 184.9,419.4 192.4,421 199.9,421.4 207.3,420.2 214.8,421 222.3,424.8 229.8,424.1 237.2,416.4 244.7,420.7 252.2,422.9 259.7,424.1 267.1,423.9 274.6,419.2 282.1,414.2 289.6,424.1 297.1,424.4 304.5,423.5 312,421 319.5,420.4 326.9,422.3 334.4,419.2 341.9,423.5 349.4,421.7 356.8,416.1 364.3,420.2 371.8,422.3 379.3,421 386.8,424.1 394.2,417.3 401.7,422.3 409.2,416.1 416.6,424.1 424.1,424.8 431.6,424.8 439.1,424.1 446.5,418.5 454,413.6 461.5,413.6 469,421.7 476.4,418.5 483.9,419.8 491.4,420.4 498.9,421 506.3,424.1 513.8,420.4 521.3,421 528.8,418.9 536.2,424.1 543.7,414.2 551.2,423.5 558.7,424.4 566.1,423.9 573.6,423.5 581.1,421.7 588.6,424.1 596,424.4 603.5,421.4 611,421.4 618.5,423.5 626,423.9 633.4,419.8 640.9,420.7 648.4,422.9 655.9,417.9 663.3,420.7 670.8,423.5 678.3,419.8 685.8,423.1 693.2,423.5 700.7,417.3 708.2,421.7 715.6,422.3 723.1,424.1 730.6,421.7 738.1,420.2 745.6,424.1 753,420.2 760.5,420.2 768,421.7 775.5,424.4 782.9,422.3 790.4,422.3 797.9,421.4 805.4,421.4 812.8,414 820.3,419.2 827.8,421 835.2,421.4 842.7,416.4 850.2,423.9 857.7,421.7 865.1,422.3 872.6,424.1 880.1,422.9 887.6,421 895,424.1 902.5,423.5 910,419.2 917.5,419.8 925,424.1 932.4,419.2 939.9,421.9 947.4,421.9 954.9,424.4 962.3,421.9 969.8,421.9 977.3,421 984.8,424.1 992.2,416.7 999.7,411.1 1007.2,424.1 1014.6,424.4 1022.1,420.7 1029.6,420.7 1037.1,424 1044.5,423.4 1052,421.4 1059.5,423.8 1067,424.3 1074.5,424.3 1081.9,424.3 1089.4,424 1096.9,421.4 1104.3,420.7 1111.8,421.1 1119.3,424.7 1126.8,424 1134.2,424 1141.7,418.7 1149.2,424 1156.7,420.7 1164.2,420.3 1171.6,414.8 1179.1,418.7 1186.6,423.4 1194,420.7 1201.5,417.4 1209,420.7 1216.5,423.8 1224,420.7 1231.4,424.3 1238.9,423.4 1246.4,421.1 1253.8,424 1261.3,424 1268.8,424.3 1276.3,421.4 1283.8,422 1291.2,424 1298.7,424.7 1306.2,424.7 1313.7,424.7 1321.1,424.7 1328.6,424.7 1336.1,424 1343.5,422.7 1351,416.1" fill="none" stroke="#5a4bb9" stroke-width="4.2" stroke-linejoin="round" stroke-linecap="round" /></g><rect x="100.7" y="424.9" width="1256.7" height="2.2" fill="#5a6480"/><rect x="146.3" y="427.0" width="2.2" height="10" fill="#5a6480"/><text x="147.4" y="459.3" text-anchor="middle" class="tk">Wed 9</text><rect x="325.7" y="427.0" width="2.2" height="10" fill="#5a6480"/><text x="326.8" y="459.3" text-anchor="middle" class="tk">Thu 10</text><rect x="505.2" y="427.0" width="2.2" height="10" fill="#5a6480"/><text x="506.3" y="459.3" text-anchor="middle" class="tk">Fri 11</text><rect x="684.6" y="427.0" width="2.2" height="10" fill="#5a6480"/><text x="685.7" y="459.3" text-anchor="middle" class="tk">Sat 12</text><rect x="864" y="427.0" width="2.2" height="10" fill="#5a6480"/><text x="865.1" y="459.3" text-anchor="middle" class="tk">Apr 13</text><rect x="1043.5" y="427.0" width="2.2" height="10" fill="#5a6480"/><text x="1044.6" y="459.3" text-anchor="middle" class="tk">Mon 14</text><rect x="1222.9" y="427.0" width="2.2" height="10" fill="#5a6480"/><text x="1224" y="459.3" text-anchor="middle" class="tk">Tue 15</text></svg><i class="sw" style="left:79px;background:#4f96e3"></i><span class="lg" style="left:116.7px;letter-spacing:0.01px">us-west3</span><i class="sw" style="left:253.5px;background:#5a4bb9"></i><span class="lg" style="left:291.2px;letter-spacing:0.01px">eu-west-3</span></div>

</div>
</body></html>
